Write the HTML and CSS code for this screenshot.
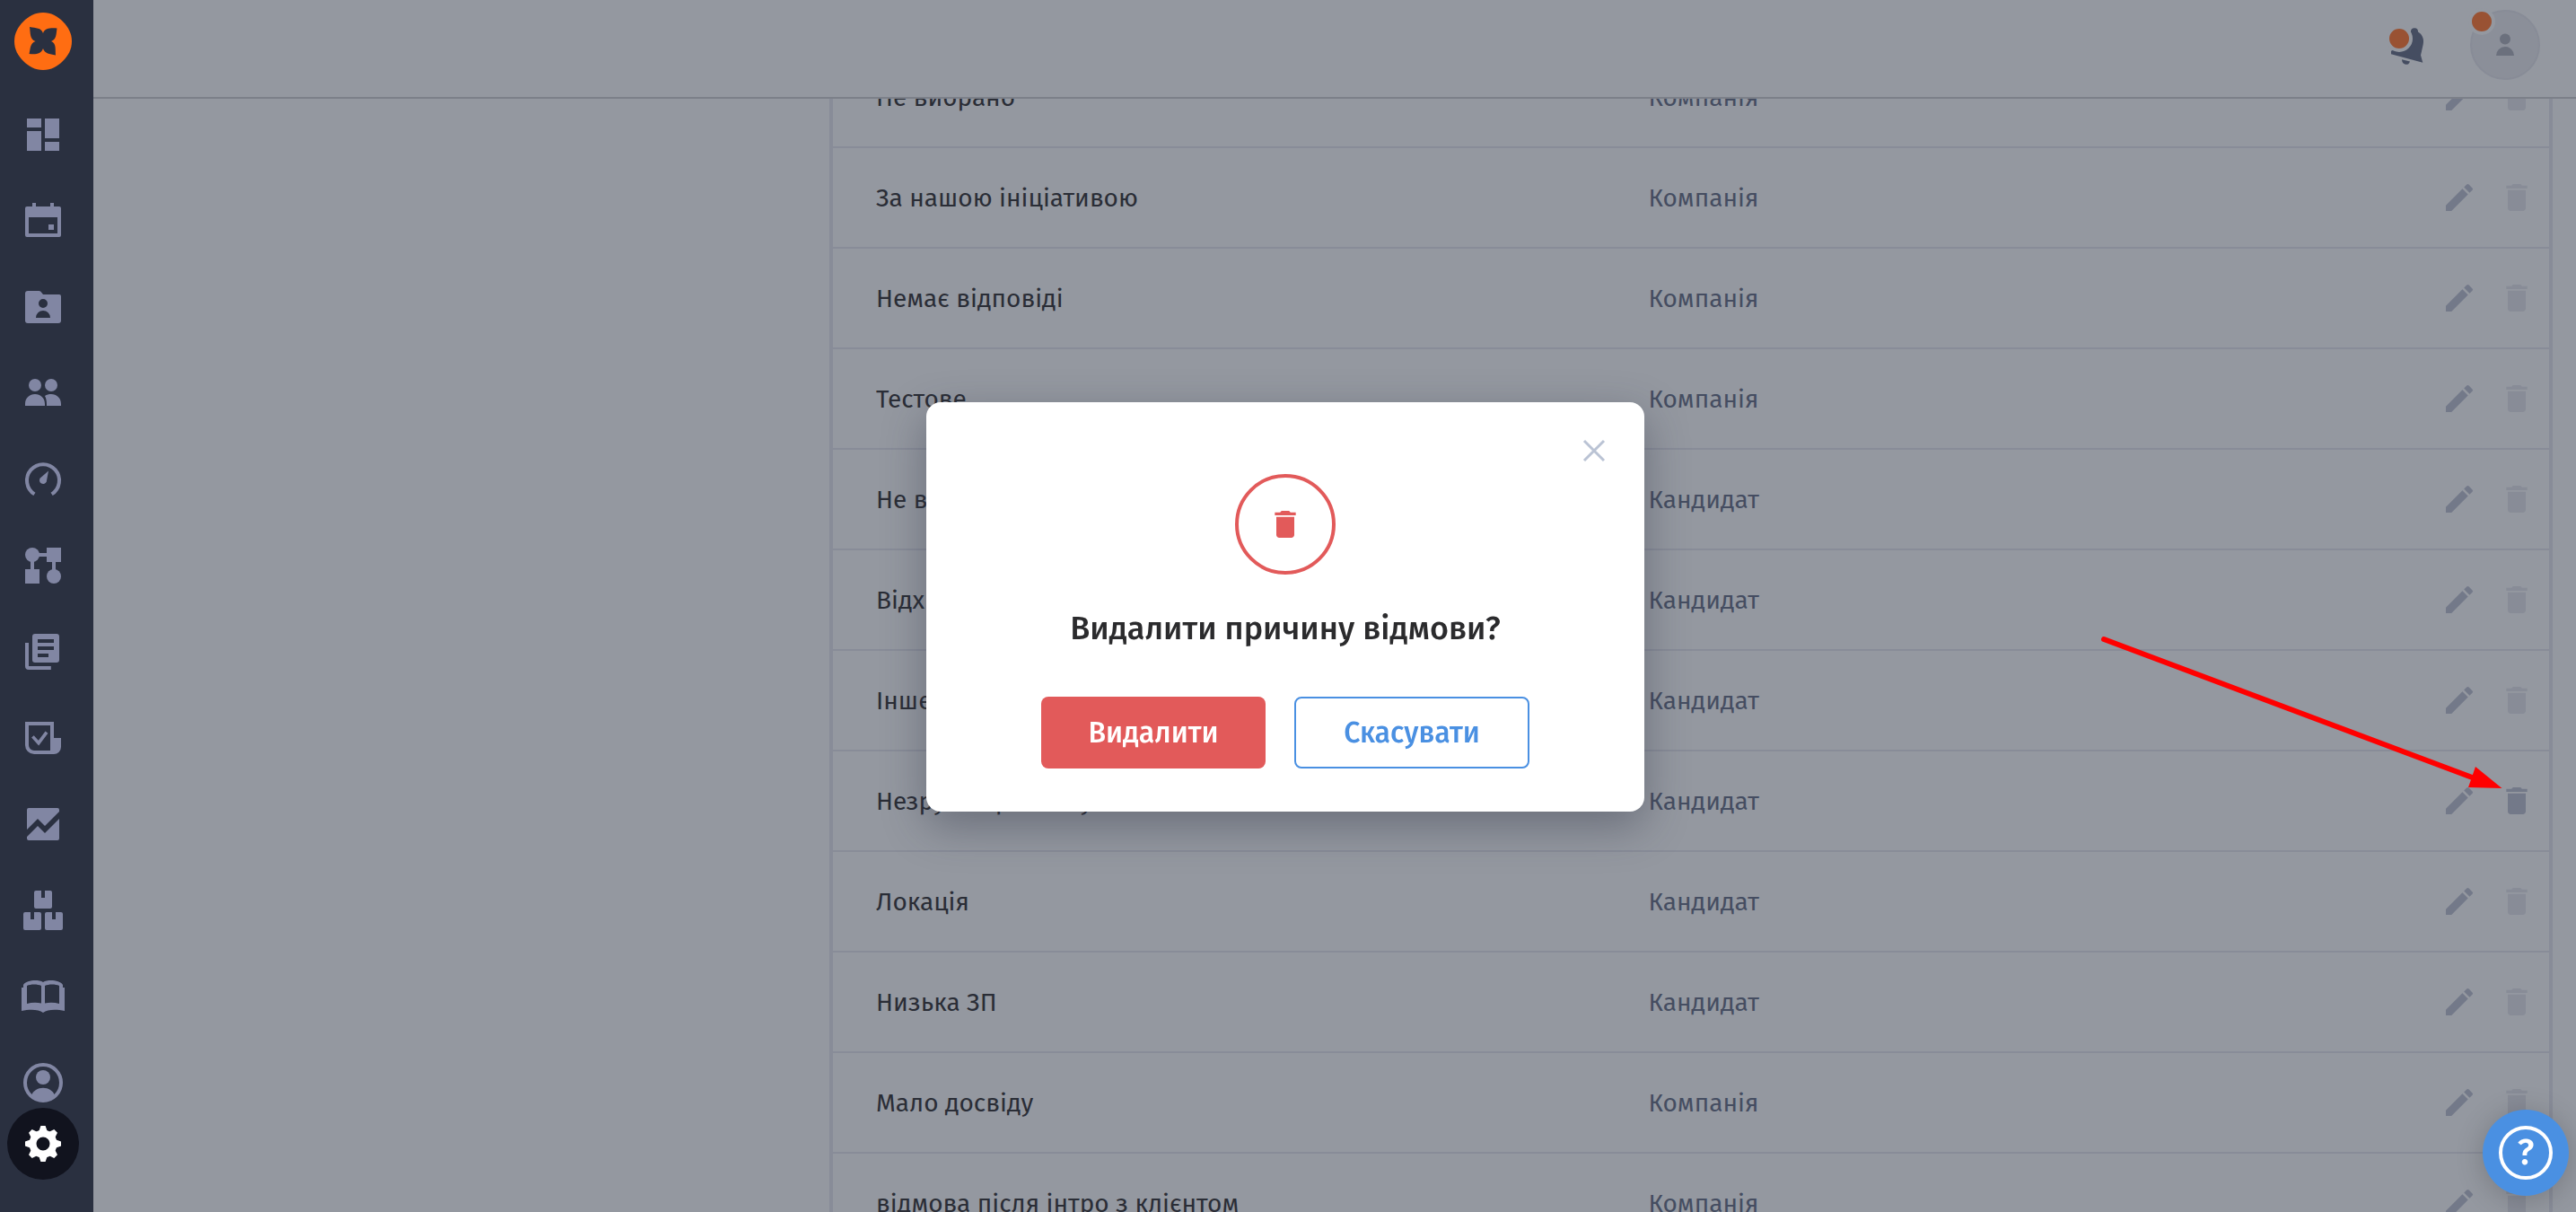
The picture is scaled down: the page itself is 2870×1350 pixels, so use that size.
FILE: index.html
```html
<!DOCTYPE html>
<html lang="uk">
<head>
	<meta charset="UTF-8">
	<title>Причини відмови</title>
	<link rel="stylesheet" href="styles.css">
</head>
<body>

	<!-- icons -->
	<svg class="sprite" aria-hidden="true">
		<symbol id="i-edit" viewBox="0 0 24 24"><path d="M3 17.25V21h3.75L17.81 9.94l-3.75-3.75L3 17.25zM20.71 7.04a1 1 0 0 0 0-1.41l-2.34-2.34a1 1 0 0 0-1.41 0l-1.83 1.83 3.75 3.75 1.83-1.83z"/></symbol>
		<symbol id="i-trash" viewBox="0 0 24 24"><path d="M6 19c0 1.1.9 2 2 2h8c1.1 0 2-.9 2-2V7H6v12zM19 4h-3.5l-1-1h-5l-1 1H5v2h14V4z"/></symbol>
	</svg>

	<aside class="sidebar">
		<a class="logo" href="#" aria-label="Головна">
			<svg viewBox="16 14 64 64"><path fill="#ff6d12" d="M48 14c9 0 16 4 22 10s10 13 10 22-4 16-10 22-13 10-22 10-16-4-22-10-10-13-10-22 4-16 10-22 13-10 22-10z"/><path fill="#2a3040" d="M33 30c7 1.500 13 .5 15 7 2-6 9-6 15.500-5.500-1 6.500-.5 12.500-6.500 14.500 6 2.500 4.500 9 5 15.500-7-1.500-12-1.500-14-7.500-2 6-8 7-15.500 6 1.500-5 .5-11.500 7-14-6.500-2.500-5.500-9-6.500-16z"/></svg>
		</a>
		<nav class="menu">
			<a href="#" aria-label="Дашборд"><svg viewBox="0 0 24 24"><path d="M3 3h8v5H3zM3 10h8v11H3zM13 3h8v11h-8zM13 16h8v5h-8z"/></svg></a>
			<a href="#" aria-label="Календар"><svg viewBox="0 0 24 24"><path fill-rule="evenodd" d="M6 2h2v2h8V2h2v2h3a1 1 0 0 1 1 1v15a1 1 0 0 1-1 1H3a1 1 0 0 1-1-1V5a1 1 0 0 1 1-1h3zM4 10v9h16v-9z"/><path d="M15 14h3v3h-3z"/></svg></a>
			<a href="#" aria-label="Вакансії"><svg viewBox="0 0 24 24"><path fill-rule="evenodd" d="M3.500 3h6.200q.6 0 1 .4L12 5h9a1 1 0 0 1 1 1v13.500a1.500 1.500 0 0 1-1.500 1.500h-17A1.500 1.500 0 0 1 2 19.500v-15A1.500 1.500 0 0 1 3.500 3zM12 7.500a2.500 2.500 0 1 0 0 5 2.500 2.500 0 0 0 0-5zM8 18h8a4 4 0 0 0-8 0z"/></svg></a>
			<a href="#" aria-label="Кандидати"><svg viewBox="0 0 24 24"><circle cx="7.500" cy="7.500" r="3.500"/><circle cx="16.500" cy="7.500" r="3.500"/><path d="M2 19v-1c0-3.500 2.500-5.500 5.500-5.500S13 14.500 13 18v1zM13 13.500c1-.7 2.200-1 3.500-1 3 0 5.500 2 5.500 5.500v1h-8v-1c0-1.700-.3-3.100-1-4.500z"/></svg></a>
			<a href="#" aria-label="Показники"><svg viewBox="0 0 24 24"><path fill="none" stroke="currentColor" stroke-width="2" d="M7.200 20.200a9 9 0 1 1 9.600 0"/><path d="M15 7.200l-1.100 5.900a2 2 0 1 1-3.500-1.800z"/></svg></a>
			<a href="#" aria-label="Процеси"><svg viewBox="0 0 24 24"><circle cx="6" cy="6" r="4"/><circle cx="18" cy="18" r="4"/><path d="M14 2h8v8h-8zM2 14h8v8H2zM9 5h6v2H9zM5 9h2v6H5zM17 9h2v6h-2z"/></svg></a>
			<a href="#" aria-label="Шаблони"><svg viewBox="0 0 24 24"><path fill-rule="evenodd" d="M7.500 2h12A1.500 1.500 0 0 1 21 3.500v13a1.500 1.500 0 0 1-1.500 1.500h-12A1.500 1.500 0 0 1 6 16.500v-13A1.500 1.500 0 0 1 7.500 2zM9 5v2h9V5zM9 9v2h9V9zM9 13v2h6v-2z"/><path d="M2 7h2v13h12.400v2H4a2 2 0 0 1-2-2z"/></svg></a>
			<a href="#" aria-label="Завдання"><svg viewBox="0 0 24 24"><path fill-rule="evenodd" d="M2 3h16v9h4v5a4 4 0 0 1-4 4H7a5 5 0 0 1-5-5zM4 5v11a3 3 0 0 0 3 3h9V5z"/><path fill="none" stroke="currentColor" stroke-width="1.800" d="M6.200 11.200l3.300 3.600 4.500-6"/></svg></a>
			<a href="#" aria-label="Звіти"><svg viewBox="0 0 24 24"><path d="M4 3h16a1 1 0 0 1 1 1v1l-8 8-4-4-6 6V4a1 1 0 0 1 1-1zM3 19l6-6 4 4 8-8v11a1 1 0 0 1-1 1H4a1 1 0 0 1-1-1z"/></svg></a>
			<a href="#" aria-label="Склад"><svg viewBox="0 0 24 24"><path d="M8 1h3v4h2V1h3a1 1 0 0 1 1 1v8a1 1 0 0 1-1 1H8a1 1 0 0 1-1-1V2a1 1 0 0 1 1-1zM2 13h3v4h2v-4h3a1 1 0 0 1 1 1v8a1 1 0 0 1-1 1H2a1 1 0 0 1-1-1v-8a1 1 0 0 1 1-1zM14 13h3v4h2v-4h3a1 1 0 0 1 1 1v8a1 1 0 0 1-1 1h-8a1 1 0 0 1-1-1v-8a1 1 0 0 1 1-1z"/></svg></a>
			<a href="#" aria-label="База знань"><svg viewBox="0 0 24 24"><path fill-rule="evenodd" d="M1 7V5.500C2.500 3 9 2.200 12 4c3-1.800 9.500-1 11 1.500V7h1v13c-4.500-1-9.500-1-12 1-2.500-2-7.500-2-12-1V7zM3 6v10c2.500-.7 5.500-.8 8-.2V6c-2-1-6-1-8 0zM13 6v9.800c2.500-.6 5.500-.5 8 .2V6c-2-1-6-1-8 0z"/></svg></a>
			<a href="#" aria-label="Профіль"><svg viewBox="0 0 24 24"><circle cx="12" cy="12" r="10" fill="none" stroke="currentColor" stroke-width="2"/><circle cx="12" cy="9" r="4"/><path d="M5.500 19c1-2.500 3.500-4.100 6.500-4.100s5.500 1.600 6.500 4.100c-1.500 2-4 3-6.500 3s-5-1-6.500-3z"/></svg></a>
		</nav>
		<a class="settings" href="#" aria-label="Налаштування">
			<svg viewBox="-20 -20 40 40">
				<path fill-rule="evenodd" d="M0-15.500a15.500 15.500 0 1 0 0 31 15.500 15.500 0 0 0 0-31zM0-7.500a7.500 7.500 0 1 1 0 15 7.500 7.500 0 0 1 0-15z"/>
				<path id="teeth" d="M-2.600-20h5.200L5-13H-5zM-2.600 20h5.200L5 13H-5zM-20-2.600v5.200L-13 5V-5zM20-2.600v5.200L13 5V-5z"/>
				<use href="#teeth" transform="rotate(45)"/>
			</svg>
		</a>
	</aside>

	<div class="page">
		<header class="header">
			<button class="bell" type="button" aria-label="Сповіщення">
				<svg viewBox="0 0 44 56"><path d="M26 13a4 4 0 1 1 8 .5c5 3 7 8 5.700 14L37 39.500l2.300 8.300L4 38.300v-3.500l12-5z"/><path d="M16 44.200l9 2.200c-1 3-3 3.600-5 3.300-2.500-.5-4-2.500-4-5.500z"/></svg>
				<span class="dot"></span>
			</button>
			<button class="avatar" type="button" aria-label="Профіль">
				<svg viewBox="0 0 24 28"><circle cx="12" cy="7.500" r="6"/><path d="M2 26a10 10 0 0 1 20 0z"/></svg>
				<span class="dot"></span>
			</button>
		</header>

		<main class="content">
			<table class="reasons">
				<tbody>
					<tr><td>Не вибрано</td><td class="type">Компанія</td><td class="actions"></td></tr>
					<tr><td>За нашою ініціативою</td><td class="type">Компанія</td><td class="actions"></td></tr>
					<tr><td>Немає відповіді</td><td class="type">Компанія</td><td class="actions"></td></tr>
					<tr><td>Тестове</td><td class="type">Компанія</td><td class="actions"></td></tr>
					<tr><td>Не вибрано</td><td class="type">Кандидат</td><td class="actions"></td></tr>
					<tr><td>Відхилено</td><td class="type">Кандидат</td><td class="actions"></td></tr>
					<tr><td>Інше</td><td class="type">Кандидат</td><td class="actions"></td></tr>
					<tr class="active"><td>Незручне розташування</td><td class="type">Кандидат</td><td class="actions"></td></tr>
					<tr><td>Локація</td><td class="type">Кандидат</td><td class="actions"></td></tr>
					<tr><td>Низька ЗП</td><td class="type">Кандидат</td><td class="actions"></td></tr>
					<tr><td>Мало досвіду</td><td class="type">Компанія</td><td class="actions"></td></tr>
					<tr><td>відмова після інтро з клієнтом</td><td class="type">Компанія</td><td class="actions"></td></tr>
				</tbody>
			</table>
		</main>
	</div><!-- .page -->

	<div class="overlay">
		<div class="modal" role="dialog" aria-labelledby="modal-title">
			<button class="close" type="button" aria-label="Закрити">
				<svg viewBox="0 0 32 32"><path d="M5 5l22 22M27 5L5 27"/></svg>
			</button>
			<div class="modal-icon"><svg><use href="#i-trash"/></svg></div>
			<h2 class="modal-title" id="modal-title">Видалити причину відмови?</h2>
			<div class="modal-btns">
				<button class="btn btn-danger" type="button">Видалити</button>
				<button class="btn btn-outline" type="button">Скасувати</button>
			</div>
		</div>
	</div>

	<svg class="arrow" viewBox="0 0 450 180"><path d="M4 12l413 155" fill="none" stroke="#f00" stroke-width="6" stroke-linecap="round"/><path d="M418 154l29.500 24-37.500-1z" fill="#f00"/></svg>

	<button class="help" type="button" aria-label="Допомога"><span>?</span></button>

	<script src="script.js"></script>
</body>
</html>
```

FILE: styles.css
```css
*{ box-sizing: border-box;}
body{ display: flex; margin: 0; height: 100vh; overflow: hidden; font-family: "Fira Sans", "Noto Sans", sans-serif; font-size: 28px; color: #2a2d36; background: #9498a0;}
button{ padding: 0; border: 0; background: none; font-family: inherit; cursor: pointer;}
svg{ display: block; fill: currentColor;}
.sprite{ position: absolute; width: 0; height: 0;}

/* sidebar */
.sidebar{ display: flex; flex: none; flex-direction: column; align-items: center; width: 104px; padding: 14px 8px 0 0; background: #2a3040;}
.logo svg{ width: 64px; height: 64px;}
.menu{ display: flex; flex-direction: column; gap: 48px; margin-top: 48px;}
.menu a{ color: #8186a3;}
.menu svg{ width: 48px; height: 48px;}
.settings{ display: flex; flex: none; align-items: center; justify-content: center; margin-top: 4px; width: 80px; height: 80px; border-radius: 50%; color: #fff; background: #11131e;}
.settings svg{ width: 40px; height: 40px;}

/* header */
.page{ display: flex; flex: 1; flex-direction: column; min-width: 0;}
.header{ display: flex; flex: none; align-items: center; justify-content: flex-end; gap: 48px; height: 110px; padding: 0 40px 8px 0; border-bottom: 2px solid #7c8089;}
.bell, .avatar{ position: relative;}
.bell{ color: #454d61;}
.bell svg{ width: 44px; height: 56px;}
.avatar{ display: flex; align-items: center; justify-content: center; width: 78px; height: 78px; border: 2px solid #888c97; border-radius: 50%; color: #6b707d; background: #8b8f99;}
.avatar svg{ width: 24px; height: 28px;}
.dot{ position: absolute; width: 30px; height: 30px; border: 4px solid #9498a0; border-radius: 50%; background: #995233;}
.bell .dot{ top: 6px; left: -2px;}
.avatar .dot{ top: -4px; left: -4px;}

/* table */
.content{ flex: 1; min-height: 0; overflow: hidden; padding: 0 26px 0 820px;}
.reasons{ width: 100%; margin-top: -57px; border: solid #888c98; border-width: 0 4px; border-spacing: 0; table-layout: fixed;}
.reasons td{ height: 112px; padding: 0 0 0 48px; border-bottom: 2px solid #888c98;}
.reasons td:first-child{ width: 45%;}
.reasons .type{ color: #454d61;}
.reasons .actions{ width: 168px; padding: 0 16px 0 0;}
.tools{ display: flex; justify-content: flex-end; gap: 24px;}
.tools button{ color: #737989;}
.tools button:disabled{ color: #888c97;}
.tools svg{ width: 40px; height: 40px;}

/* modal */
.overlay{ position: fixed; top: 0; right: 0; bottom: 0; left: 0; display: flex; align-items: center; justify-content: center; padding: 2px 6px 0 0;}
.modal{ position: relative; display: flex; flex-direction: column; align-items: center; width: 800px; padding: 80px 0 48px; border-radius: 16px; background: #fff; box-shadow: 0 16px 48px rgba(42,48,64,.4);}
.close{ position: absolute; top: 38px; right: 40px; color: #bac3d4;}
.close svg{ width: 32px; height: 32px; stroke: currentColor; stroke-width: 3;}
.modal-icon{ display: flex; align-items: center; justify-content: center; width: 112px; height: 112px; border: 4px solid #e25a5a; border-radius: 50%; color: #e25a5a;}
.modal-icon svg{ width: 40px; height: 40px;}
.modal-title{ margin: 36px 0 52px; font-size: 36px; line-height: 48px; font-weight: 500; color: #2b2b2d;}
.modal-btns{ display: flex; gap: 32px;}
.btn{ height: 80px; min-width: 250px; border-radius: 8px; font-size: 32px; font-weight: 500;}
.btn-danger{ color: #fff; background: #e25a5a;}
.btn-outline{ min-width: 262px; border: 2px solid #4a90e2; color: #4a90e2; background: #fff;}

/* pointer to the clicked icon */
.arrow{ position: absolute; top: 700px; right: 80px; width: 450px; height: 180px;}

.help{ position: fixed; right: 8px; bottom: 18px; display: flex; align-items: center; justify-content: center; width: 96px; height: 96px; border-radius: 50%; background: #4a90e2; box-shadow: 0 4px 32px rgba(0,0,0,.2);}
.help span{ width: 60px; height: 60px; border: 4px solid #fff; border-radius: 50%; font-size: 40px; line-height: 52px; font-weight: 500; color: #fff;}
```

FILE: script.js
```js
// edit / delete buttons of every row, only the active one can be deleted
document.querySelectorAll('.reasons tr').forEach(function (row) {
	var off = row.className === 'active' ? '' : ' disabled';
	row.querySelector('.actions').innerHTML = '<div class="tools">' +
		'<button type="button" aria-label="Редагувати"><svg><use href="#i-edit"/></svg></button>' +
		'<button type="button" aria-label="Видалити"' + off + '><svg><use href="#i-trash"/></svg></button>' +
		'</div>';
});
```
